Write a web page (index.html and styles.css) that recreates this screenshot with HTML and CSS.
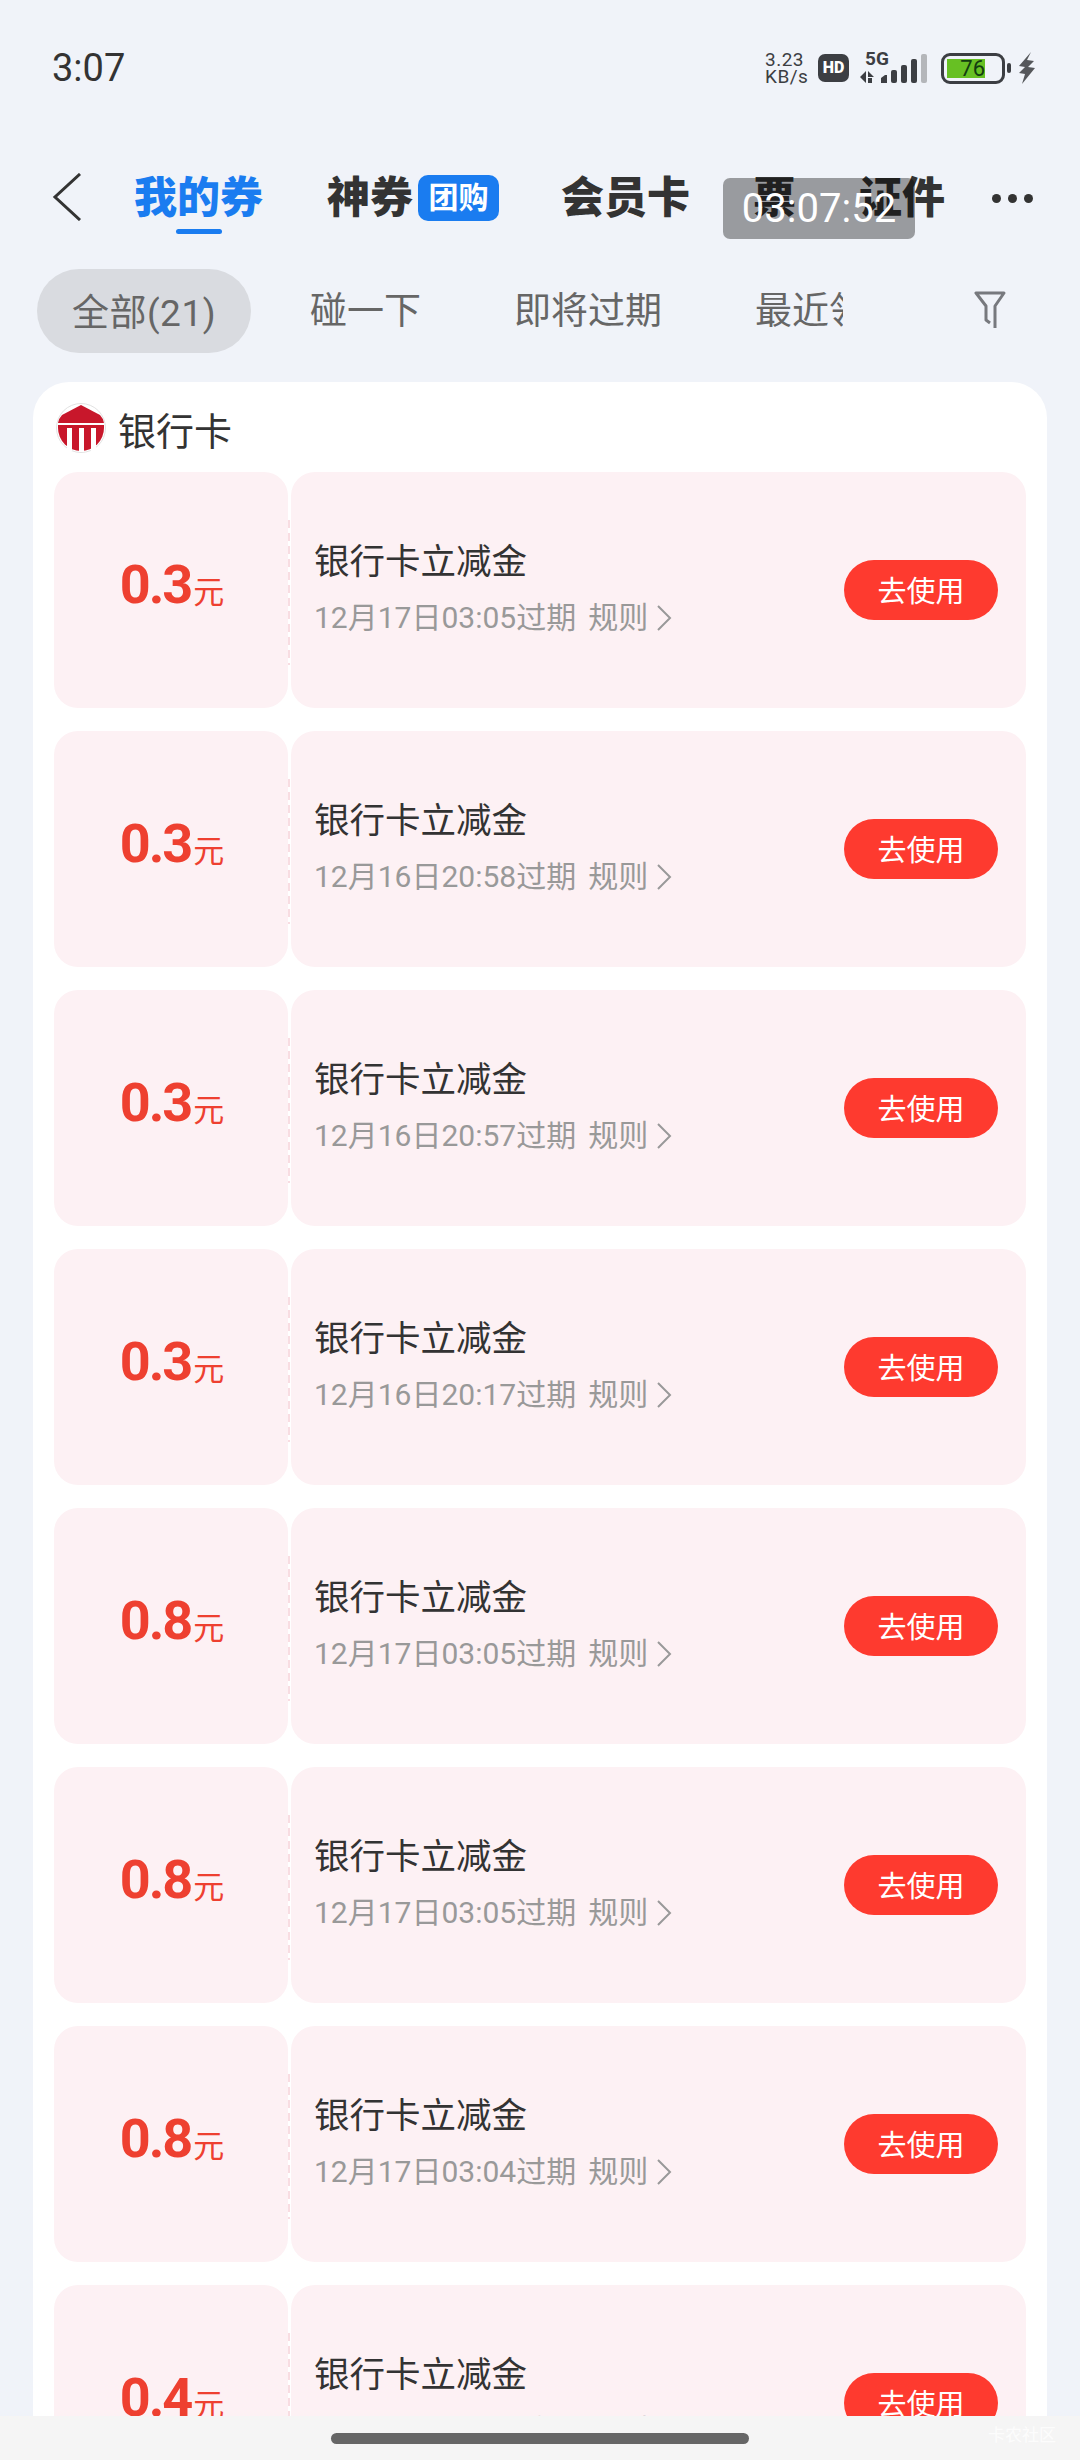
FILE: index.html
```html
<!DOCTYPE html>
<html>
<head>
    <link rel="stylesheet" href="styles.css">
</head>
<body>
    <div class="screen">
        <div class="status-bar">
            <span class="clock">3:07</span>
            <div class="status-icons">
                <div class="speed"><span>3.23</span><span>KB/s</span></div>
                <span class="hd">HD</span>
                <svg class="signal" width="68" height="32" viewBox="0 0 68 32">
                    <text x="5" y="13" class="signal-text">5G</text>
                    <path d="M6 19v12L0 25zM8 19l6 6H8zM8 26h4v5H8z" fill="#3c3e43"/>
                    <path d="M21 26l4-3h2v8h-6z" fill="#3c3e43"/>
                    <rect x="31" y="18" width="6" height="13" rx="2" fill="#3c3e43"/>
                    <rect x="41" y="13" width="6" height="18" rx="2" fill="#3c3e43"/>
                    <rect x="51" y="7" width="6" height="24" rx="2" fill="#3c3e43"/>
                    <rect x="61" y="2" width="6" height="29" rx="2" fill="#b4b6ba"/>
                </svg>
                <div class="battery">
                    <div class="battery-fill">76</div>
                </div>
                <span class="battery-nub"></span>
                <svg class="bolt" width="18" height="32" viewBox="0 0 18 32">
                    <path d="M13 0L1 14l6 1-6 6 6 1-3 10 13-16-7-1 6-6-7-1z" fill="#55575b"/>
                </svg>
            </div>
        </div>

        <div class="nav">
            <svg class="back" width="30" height="48" viewBox="0 0 30 48">
                <path d="M28 1L3 24l25 23" fill="none" stroke="#333" stroke-width="3"/>
            </svg>
            <div class="tab tab-active">我的券</div>
            <div class="tab tab-deals">神券<span class="tag">团购</span></div>
            <div class="tab tab-members">会员卡</div>
            <div class="tab tab-ticket">票</div>
            <div class="tab tab-docs">证件</div>
            <div class="more"><span></span><span></span><span></span></div>
        </div>

        <div class="filters">
            <div class="filter filter-active">全部(21)</div>
            <div class="filter-scroll">
                <span>碰一下</span>
                <span>即将过期</span>
                <span>最近领取</span>
            </div>
            <svg class="funnel" width="34" height="40" viewBox="0 0 34 40">
                <path d="M16 32l-4-3V15L2 2h28L21 15v22" fill="none" stroke="#77797e" stroke-width="3" stroke-linejoin="round"/>
            </svg>
        </div>

        <div class="panel">
            <div class="panel-head">
                <svg class="bank" width="50" height="50" viewBox="0 0 50 50">
                    <circle cx="25" cy="25" r="24.5" fill="#fff" stroke="#e2e2e2" stroke-width="1"/>
                    <path d="M25 2L44 12Q47 15 48 20H2Q3 15 6 12z" fill="#c8172b"/>
                    <path d="M2 22H48V25A23 23 0 0 1 2 25z" fill="#c8172b"/>
                    <path d="M11 25h5v23h-5zM23 25h5v24h-5zM35 25h5v23h-5z" fill="#fff"/>
                </svg>
                <span>银行卡</span>
            </div>
            <div class="coupons" id="coupons"></div>
        </div>

        <div class="time-stamp">03:07:52</div>
        <div class="home-bar">
            <span class="home-pill"></span>
            <span class="watermark">卡农社区</span>
        </div>
    </div>

    <script>
        const coupons = [
            { amount: '0.3', date: '12月17日03:05' },
            { amount: '0.3', date: '12月16日20:58' },
            { amount: '0.3', date: '12月16日20:57' },
            { amount: '0.3', date: '12月16日20:17' },
            { amount: '0.8', date: '12月17日03:05' },
            { amount: '0.8', date: '12月17日03:05' },
            { amount: '0.8', date: '12月17日03:04' },
            { amount: '0.4', date: '12月17日03:04' }
        ];

        document.getElementById('coupons').innerHTML = coupons.map(coupon => `
            <div class="coupon">
                <div class="coupon-left">
                    <span class="amount">${coupon.amount}</span><span class="unit">元</span>
                </div>
                <div class="coupon-right">
                    <div class="coupon-info">
                        <div class="coupon-title">银行卡立减金</div>
                        <div class="coupon-date">
                            <span>${coupon.date}过期</span>
                            <span class="rule">规则</span>
                            <svg width="15" height="26" viewBox="0 0 15 26">
                                <path d="M1 1l12 12L1 25" fill="none" stroke="#999" stroke-width="2"/>
                            </svg>
                        </div>
                    </div>
                    <div class="use-btn">去使用</div>
                </div>
            </div>
        `).join('');
    </script>
</body>
</html>
```

FILE: styles.css
```css
* {
    box-sizing: border-box;
}

html, body {
    margin: 0;
    padding: 0;
}

body {
    font-family: Roboto, "Noto Sans CJK SC", sans-serif;
    color: #333;
}

.screen {
    position: relative;
    width: 1080px;
    height: 2460px;
    overflow: hidden;
    background: #f0f3f9;
}

/* status bar */
.status-bar {
    display: flex;
    justify-content: space-between;
    align-items: center;
    height: 136px;
    padding: 0 44px 0 52px;
}

.clock {
    font-size: 38px;
    line-height: 34px;
    color: #333;
}

.status-icons {
    display: flex;
    align-items: center;
}

.speed {
    display: flex;
    flex-direction: column;
    width: 44px;
    margin-right: 9px;
    font-size: 19px;
    line-height: 17px;
    color: #3c3e43;
    letter-spacing: 0.5px;
}

.hd {
    width: 31px;
    height: 28px;
    margin-right: 11px;
    border-radius: 7px;
    background: #3c3e43;
    color: #fff;
    font-size: 16px;
    font-weight: 900;
    line-height: 28px;
    text-align: center;
}

.signal {
    margin-right: 13px;
}

.signal-text {
    font-family: Roboto, sans-serif;
    font-size: 19px;
    font-weight: 700;
    fill: #3c3e43;
}

.battery {
    width: 64px;
    height: 31px;
    padding: 3px;
    border: 3px solid #3c3e43;
    border-radius: 9px;
}

.battery-fill {
    width: 38px;
    height: 19px;
    background: #67c023;
    color: #123d10;
    font-size: 22px;
    line-height: 19px;
    text-align: right;
}

.battery-nub {
    width: 4px;
    height: 10px;
    margin: 0 7px 0 2px;
    border-radius: 2px;
    background: #3c3e43;
}

/* title tabs */
.nav {
    display: flex;
    align-items: center;
    height: 52px;
    margin-top: 36px;
    padding-left: 52px;
}

.back {
    flex: none;
    margin: -2px 52px 0 0;
}

.tab {
    position: relative;
    display: flex;
    align-items: center;
    font-size: 43px;
    font-weight: 900;
    line-height: 52px;
    white-space: nowrap;
}

.tab-active {
    color: #1a7cf0;
}

.tab-active::after {
    content: "";
    position: absolute;
    left: 42px;
    bottom: -10px;
    width: 46px;
    height: 5px;
    border-radius: 3px;
    background: #1a7cf0;
}

.tab-deals {
    margin-left: 64px;
}

.tag {
    width: 81px;
    height: 46px;
    margin: -1px 0 0 5px;
    border-radius: 10px;
    background: #1a7cf0;
    color: #fff;
    font-size: 30px;
    font-weight: 700;
    line-height: 45px;
    text-align: center;
}

.tab-members {
    margin-left: 62px;
}

.tab-ticket {
    margin-left: 63px;
}

.tab-docs {
    margin-left: 63px;
}

.more {
    display: flex;
    gap: 7px;
    margin-left: 47px;
}

.more span {
    width: 9px;
    height: 9px;
    border-radius: 50%;
    background: #333;
}

/* filter row */
.filters {
    display: flex;
    align-items: center;
    height: 84px;
    margin-top: 45px;
    padding-left: 37px;
}

.filter {
    flex: none;
    width: 214px;
    height: 84px;
    border-radius: 42px;
    font-size: 37px;
    line-height: 89px;
    letter-spacing: 0.5px;
    text-align: center;
    color: #666;
}

.filter-active {
    background: #d9dbe0;
}

.filter-scroll {
    display: flex;
    gap: 93px;
    width: 533px;
    margin-left: 59px;
    overflow: hidden;
    font-size: 37px;
    line-height: 89px;
    color: #666;
    white-space: nowrap;
}

.funnel {
    flex: none;
    margin: 0 0 0 131px;
}

/* coupon panel */
.panel {
    width: 1014px;
    margin: 29px 0 0 33px;
    padding: 21px 21px 0;
    border-radius: 36px 36px 0 0;
    background: #fff;
}

.panel-head {
    display: flex;
    align-items: center;
    height: 50px;
    font-size: 38px;
    color: #333;
}

.bank {
    margin: 0 12px 0 2px;
}

.coupons {
    display: flex;
    flex-direction: column;
    gap: 23px;
    margin-top: 19px;
}

.coupon {
    position: relative;
    display: flex;
    flex: none;
    gap: 3px;
    height: 236px;
}

.coupon-left {
    display: flex;
    flex: none;
    justify-content: center;
    align-items: baseline;
    width: 234px;
    padding: 82px 0 0 2px;
    border-radius: 24px;
    background: #fdf1f4;
    color: #ee4030;
}

.amount {
    font-size: 54px;
    font-weight: 700;
    line-height: 62px;
    letter-spacing: -2px;
}

.unit {
    margin-left: 2px;
    font-size: 31px;
}

.coupon-right {
    position: relative;
    display: flex;
    flex: 1;
    justify-content: space-between;
    align-items: center;
    padding: 0 28px 0 23px;
    border-radius: 24px;
    background: #fdf1f4;
}

.coupon-right::before {
    content: "";
    position: absolute;
    left: -3px;
    top: 48px;
    width: 2px;
    height: 145px;
    background: repeating-linear-gradient(#f8dde2 0 8px, transparent 8px 13px);
}

.coupon-title {
    font-size: 35.5px;
    line-height: 42px;
    margin-top: -2px;
    color: #333;
}

.coupon-date {
    display: flex;
    align-items: center;
    margin-top: 15px;
    font-size: 30px;
    line-height: 40px;
    color: #999;
}

.rule {
    margin: 0 9px 0 12px;
}

.use-btn {
    width: 154px;
    height: 60px;
    border-radius: 30px;
    background: #fe3a2f;
    color: #fff;
    font-size: 29px;
    line-height: 64px;
    text-align: center;
}

/* overlays */
.time-stamp {
    position: absolute;
    left: 723px;
    top: 178px;
    width: 192px;
    height: 61px;
    border-radius: 7px;
    background: rgba(0, 0, 0, 0.36);
    color: #fff;
    font-size: 40px;
    line-height: 61px;
    text-align: center;
}

.home-bar {
    position: absolute;
    left: 0;
    bottom: 0;
    display: flex;
    justify-content: center;
    align-items: center;
    width: 100%;
    height: 44px;
    background: #f5f5f5;
}

.home-pill {
    width: 418px;
    height: 11px;
    border-radius: 6px;
    background: #666;
}

.watermark {
    position: absolute;
    right: 24px;
    top: 5px;
    font-size: 17px;
    color: rgba(255, 255, 255, 0.8);
}
```
